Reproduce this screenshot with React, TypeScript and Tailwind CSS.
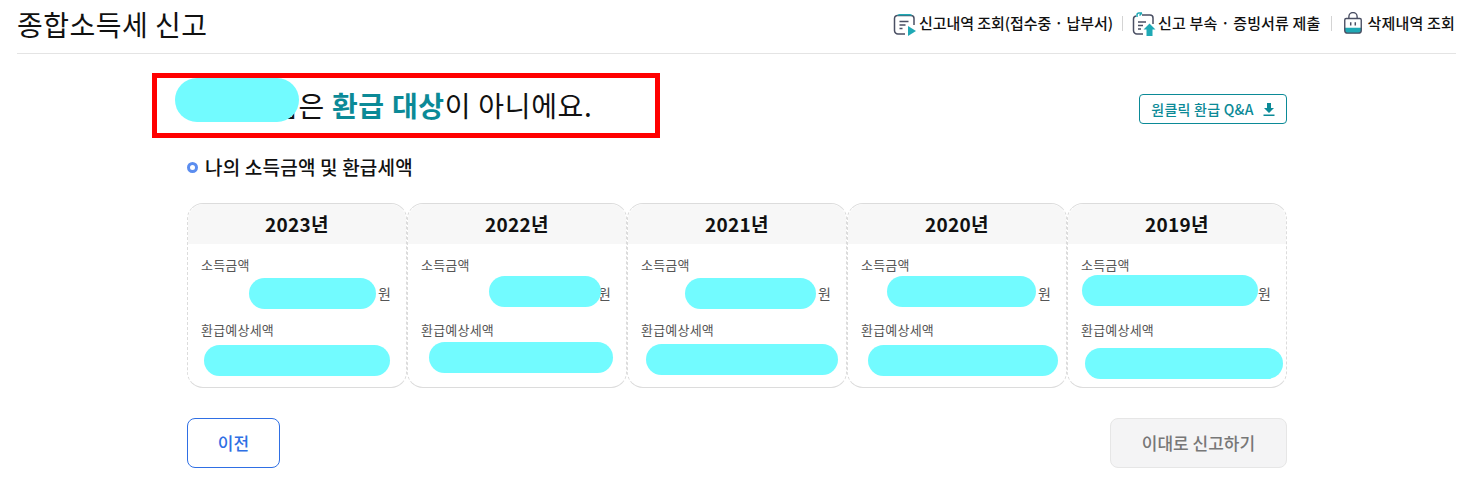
const FONT = "font-['Noto_Sans_CJK_KR','Noto_Sans',sans-serif]";

const years = [
  { year: '2023년', income: 'left-[61px] top-[74px] w-[127px] h-[31px]', refund: 'left-[16px] top-[141px] w-[186px] h-[31px]' },
  { year: '2022년', income: 'left-[81px] top-[72px] w-[112px] h-[31px]', refund: 'left-[21px] top-[138px] w-[184px] h-[31px]' },
  { year: '2021년', income: 'left-[57px] top-[74px] w-[131px] h-[31px]', refund: 'left-[18px] top-[140px] w-[192px] h-[31px]' },
  { year: '2020년', income: 'left-[39px] top-[72px] w-[149px] h-[31px]', refund: 'left-[20px] top-[141px] w-[190px] h-[31px]' },
  { year: '2019년', income: 'left-[14px] top-[71px] w-[176px] h-[31px]', refund: 'left-[17px] top-[144px] w-[198px] h-[31px]' },
];

function Blob({ className }: { className: string }) {
  return <div className={`absolute bg-[#72fbff] rounded-full ${className}`} />;
}

function IconDoc() {
  return (
    <svg width="24" height="24" viewBox="0 0 24 24" fill="none">
      <path d="M5 3.500h13a3 3 0 0 1 3 3V13M12 22H5a3.500 3.500 0 0 1-3.500-3.500V6.500A3 3 0 0 1 5 3.500" stroke="#4a4f63" strokeWidth="1.500" />
      <path d="M4 3.500A3 3 0 0 1 6.500 2h10A3 3 0 0 1 19.500 3.500z" fill="#1fa9b5" />
      <path d="M6.500 9.500h9M6.500 13h6M6.500 16.500h3" stroke="#4a4f63" strokeWidth="1.400" />
      <path d="M15 14l8 5-8 5z" fill="#1fa9b5" />
    </svg>
  );
}

function IconUpload() {
  return (
    <svg width="24" height="24" viewBox="0 0 24 24" fill="none">
      <path d="M10 3h8a3 3 0 0 1 3 3v6M11 22H5a3.500 3.500 0 0 1-3.500-3.500V7A3 3 0 0 1 4 4" stroke="#4a4f63" strokeWidth="1.500" />
      <path d="M5 5V3a2 2 0 0 1 2-2h3M10 1 7.500 3.500" stroke="#1fa9b5" strokeWidth="1.500" />
      <path d="M6 10h8M6 13.500h5M6 17h3" stroke="#4a4f63" strokeWidth="1.400" />
      <path d="M17.500 11.500 23.500 17.500H20.500V24H14.500V17.500H11.500z" fill="#1fa9b5" />
    </svg>
  );
}

function IconBasket() {
  return (
    <svg width="22" height="24" viewBox="0 0 24 26" fill="none">
      <path d="M2.500 17h19l-.6 3.500A3 3 0 0 1 18 23H6a3 3 0 0 1-2.900-2.500z" fill="#1fa9b5" />
      <path d="M3 8.500A1.500 1.500 0 0 1 4.500 7h15A1.500 1.500 0 0 1 21 8.500V20a3 3 0 0 1-3 3H6a3 3 0 0 1-3-3z" stroke="#4a4f63" strokeWidth="1.500" />
      <path d="M7.500 7V5a4.500 4.500 0 0 1 9 0v2" stroke="#4a4f63" strokeWidth="1.500" />
      <path d="M9.500 11v3.500M14.500 11v3.500" stroke="#4a4f63" strokeWidth="1.600" />
    </svg>
  );
}

function YearCard({ item }: { item: (typeof years)[number] }) {
  return (
    <div className="relative w-[220px] h-[185px] bg-white rounded-2xl border border-[#dcdcdc] [border-left-style:dashed] [border-right-style:dashed]">
      <div className="h-[40px] bg-[#f7f7f7] rounded-t-2xl flex items-center justify-center text-[19px] font-bold text-[#111] tracking-[0.3px]">
        {item.year}
      </div>
      <div className="px-[13px] pt-[11px] text-[13px] text-[#555] tracking-[0.2px]">
        <div className="leading-[20px]">소득금액</div>
        <div className="mt-[8px] text-right leading-[20px] pr-[2px] text-[14px]">원</div>
        <div className="mt-[17px] leading-[20px]">환급예상세액</div>
      </div>
      <Blob className={item.income} />
      <Blob className={item.refund} />
    </div>
  );
}

export default function App() {
  return (
    <div className={`${FONT} w-[1472px] h-[490px] bg-white overflow-hidden pl-[17px] pr-[16px]`}>
      <header className="h-[54px] border-b border-[#e4e4e4] flex items-center justify-between pb-[6px]">
        <h1 className="text-[28px] font-normal text-[#111] tracking-[0.5px]">종합소득세 신고</h1>
        <nav className="flex items-center text-[15px] font-medium text-[#111] tracking-[-0.05px]">
          <a className="flex items-center gap-[2px]"><IconDoc />신고내역 조회(접수중 · 납부서)</a>
          <span className="mx-[9px] w-px h-[15px] bg-[#d4d4d4]" />
          <a className="flex items-center gap-[2px] tracking-[0.15px]"><IconUpload />신고 부속 · 증빙서류 제출</a>
          <span className="ml-[11px] mr-[10px] w-px h-[15px] bg-[#d4d4d4]" />
          <a className="flex items-center gap-[3px] pr-[1px] tracking-[0.2px]"><IconBasket />삭제내역 조회</a>
        </nav>
      </header>

      <main className="relative w-[1100px] ml-[170px]">
        <div className="flex items-start justify-between h-[96px]">
          <h2 className="text-[28px] font-normal text-[#111] pl-[85px] pt-[29px] leading-[44px] tracking-[0.7px]">
            님은 <span className="text-[#0b8a97] font-semibold">환급 대상</span>이 아니에요.
          </h2>
          <button className="mt-[40px] h-[30px] w-[148px] rounded-[4px] border border-[#0b8a97] text-[#0b8a97] text-[14px] font-medium tracking-[0.25px] flex items-center justify-center gap-[9px]">
            원클릭 환급 Q&amp;A
            <svg width="12" height="13" viewBox="0 0 12 13" fill="#0b8a97">
              <path d="M4 0h4v5h3L6 10 1 5h3zM.5 11.500h11V13H.5z" />
            </svg>
          </button>
        </div>

        <div className="h-[53px] pb-[18px] flex items-center gap-[7px] text-[19px] font-medium text-[#111] tracking-[0.2px]">
          <span className="w-[11px] h-[11px] rounded-full border-[3px] border-[#5b8def]" />
          나의 소득금액 및 환급세액
        </div>

        <div className="flex">
          {years.map((item) => (
            <YearCard key={item.year} item={item} />
          ))}
        </div>

        <div className="mt-[30px] flex justify-between">
          <button className="w-[93px] h-[50px] rounded-lg border border-[#2f6fe4] bg-white text-[#2f6fe4] text-[17px] font-medium">
            이전
          </button>
          <button className="w-[177px] h-[50px] rounded-lg border border-[#e6e6e6] bg-[#f4f4f5] text-[#777] text-[17px] font-medium">
            이대로 신고하기
          </button>
        </div>

        {/* redaction + annotation drawn over the page */}
        <Blob className="left-[-12px] top-[24px] w-[124px] h-[44px]" />
        <div className="absolute left-[-35px] top-[19px] w-[508px] h-[65px] border-[5px] border-[#ff0000]" />
      </main>
    </div>
  );
}
